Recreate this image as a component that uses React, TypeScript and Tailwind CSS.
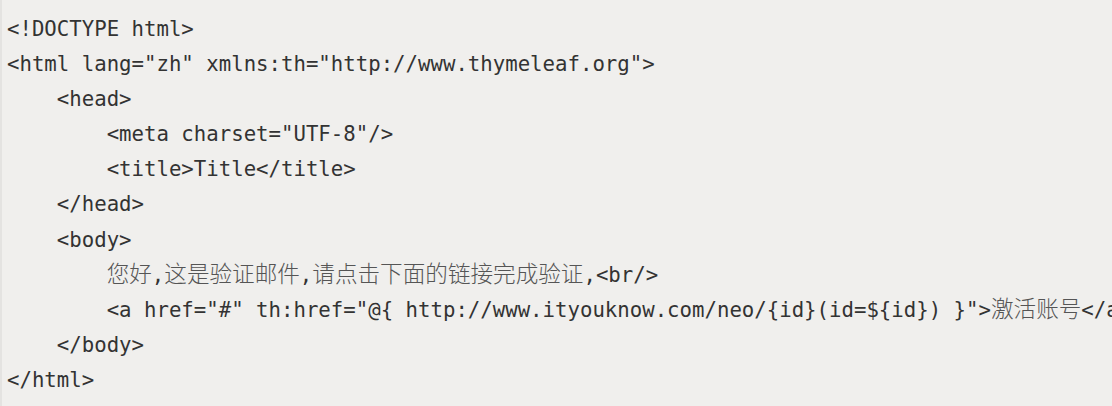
import React from 'react';

type Line = { indent: number; parts: { text: string; cjk?: boolean }[] };

const lines: Line[] = [
  { indent: 0, parts: [{ text: '<!DOCTYPE html>' }] },
  { indent: 0, parts: [{ text: '<html lang="zh" xmlns:th="http://www.thymeleaf.org">' }] },
  { indent: 1, parts: [{ text: '<head>' }] },
  { indent: 2, parts: [{ text: '<meta charset="UTF-8"/>' }] },
  { indent: 2, parts: [{ text: '<title>Title</title>' }] },
  { indent: 1, parts: [{ text: '</head>' }] },
  { indent: 1, parts: [{ text: '<body>' }] },
  {
    indent: 2,
    parts: [
      { text: '您好', cjk: true },
      { text: ',' },
      { text: '这是验证邮件', cjk: true },
      { text: ',' },
      { text: '请点击下面的链接完成验证', cjk: true },
      { text: ',<br/>' },
    ],
  },
  {
    indent: 2,
    parts: [
      { text: '<a href="#" th:href="@{ http://www.ityouknow.com/neo/{id}(id=${id}) }">' },
      { text: '激活账号', cjk: true },
      { text: '</a>' },
    ],
  },
  { indent: 1, parts: [{ text: '</body>' }] },
  { indent: 0, parts: [{ text: '</html>' }] },
];

export default function App() {
  return (
    <div className="w-[1112px] h-[406px] overflow-hidden bg-[#f0efed] border-l-2 border-[#e4e3e1]">
      <pre className="pl-[5px] pt-[12px] font-['DejaVu_Sans_Mono',monospace] text-[20.7px] leading-[35.1px] text-[#333333] whitespace-pre">
        {lines.map((line, i) => (
          <div key={i} className="h-[35.1px]">
            {'    '.repeat(line.indent)}
            {line.parts.map((p, j) =>
              p.cjk ? (
                <span
                  key={j}
                  className="font-['Noto_Sans_CJK_SC',sans-serif] text-[22.6px] leading-none font-light text-[#555555]"
                >
                  {p.text}
                </span>
              ) : (
                <span key={j}>{p.text}</span>
              )
            )}
          </div>
        ))}
      </pre>
    </div>
  );
}
